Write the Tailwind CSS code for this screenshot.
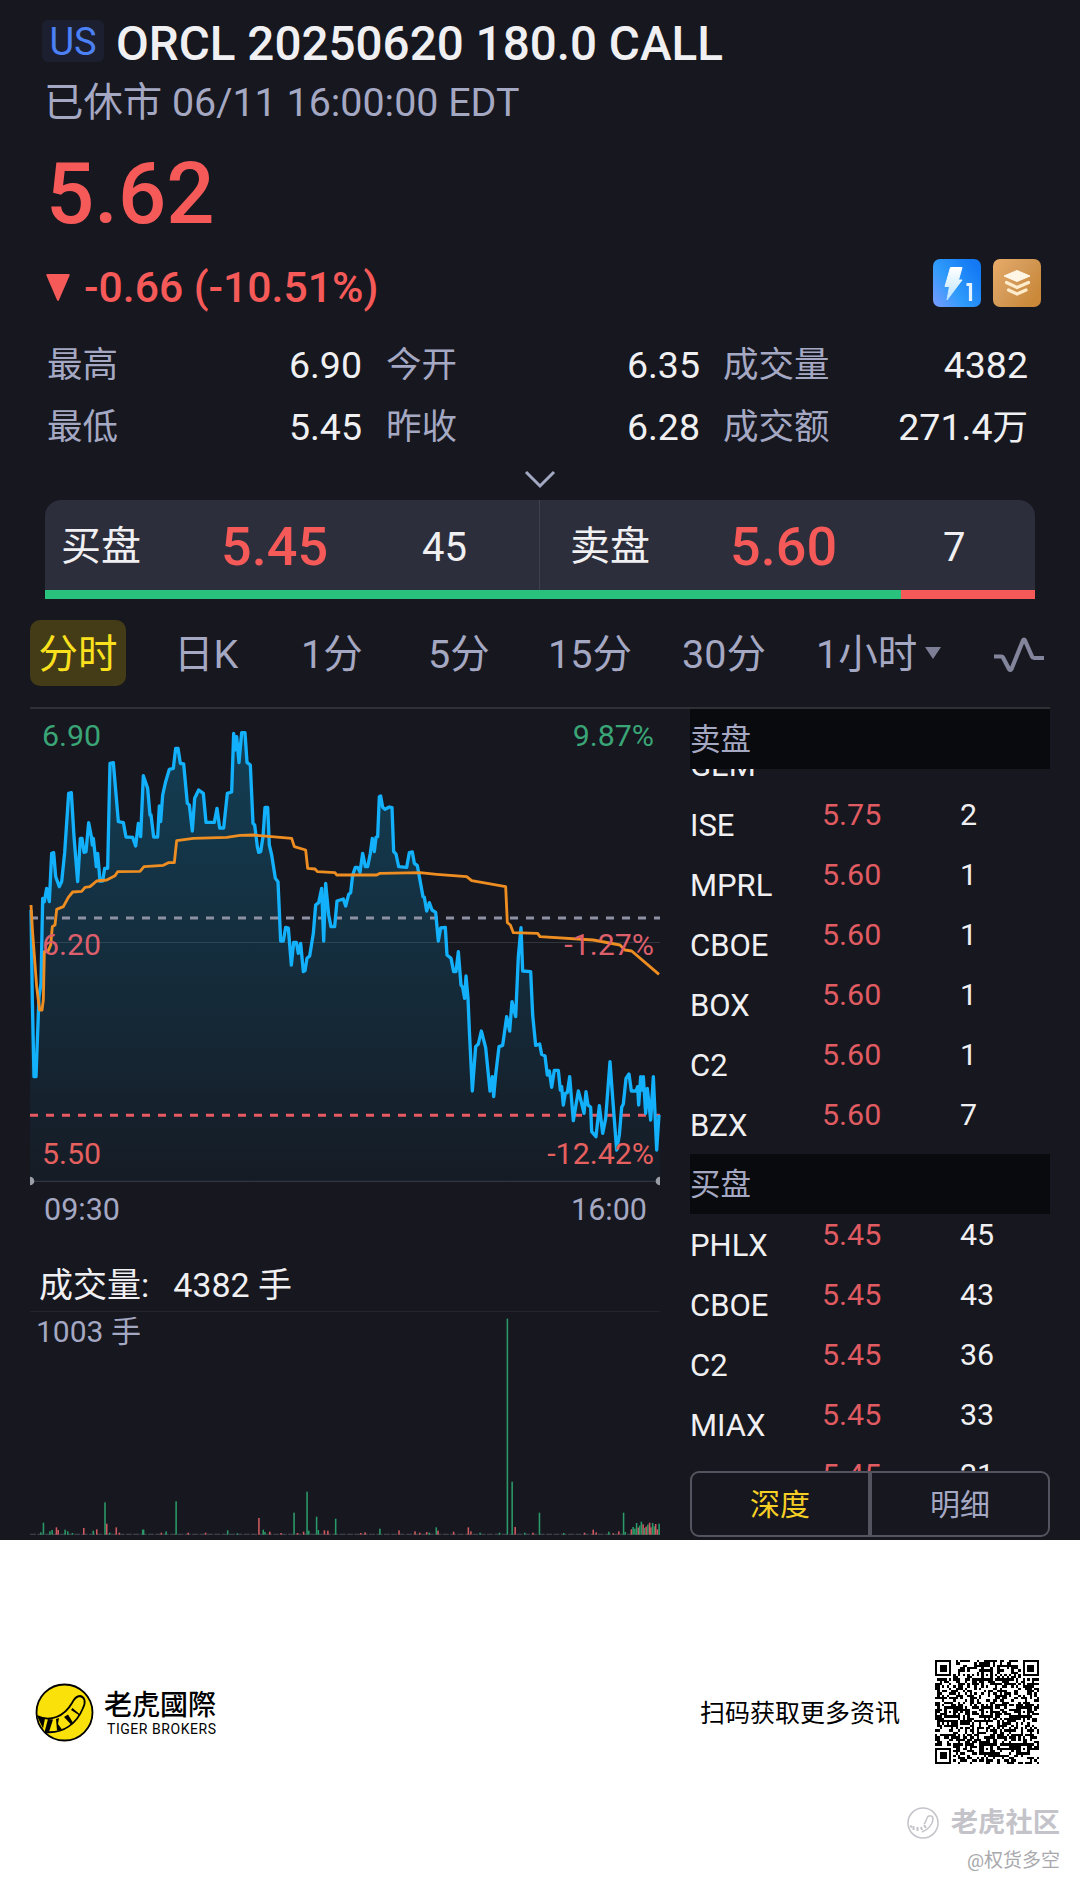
<!DOCTYPE html>
<html lang="zh-CN">
<head>
  <meta charset="UTF-8" />
  <title>ORCL 20250620 180.0 CALL</title>
  <script src="https://cdn.jsdelivr.net/npm/@tailwindcss/browser@4"></script>
</head>
<body class="w-[1080px] h-[1885px] overflow-hidden bg-white font-['Roboto','Noto_Sans_CJK_SC',sans-serif] leading-none whitespace-nowrap">

  <main class="h-[1540px] overflow-hidden bg-[#16171f] pt-5 text-[#f0f0f2]">

    <!-- Quote header -->
    <header class="pl-[42px] pr-[39px]">
      <div class="flex h-[42px] items-center">
        <span class="flex h-[42px] w-[62px] items-center justify-center rounded-md bg-[#1b1f30] pt-0.5 text-[38px] text-[#4c80f5]">US</span>
        <h1 class="ml-3 mt-2 text-[47.600px] font-medium">ORCL 20250620 180.0 CALL</h1>
      </div>
      <div class="flex h-[79px] items-center pl-0.5 pt-0.5 text-[39.400px] text-[#a5a8c3]">已休市 06/11 16:00:00 EDT</div>
      <div class="flex h-[102px] items-center pl-1 pt-1 text-[85px] font-medium text-[#f55a59]">5.62</div>
      <div class="flex h-[86px] items-center text-[#f55a59]">
        <svg class="ml-[3px] mt-[3px]" width="26" height="29" viewBox="0 0 26 29"><path d="M2 1h22q1 0 .6 1.500L14 27q-1 2-2 0L1.400 2.500Q1 1 2 1z" fill="#f55a59"/></svg>
        <span class="ml-[13px] mt-0.5 text-[42.700px] font-medium">-0.66 (-10.51%)</span>
        <div class="ml-auto mb-1.5 flex gap-3">
          <svg width="48" height="48" viewBox="0 0 48 48">
            <defs>
              <linearGradient id="blue" x1="0" y1="1" x2="1" y2="0.300"><stop offset="0" stop-color="#7a9bff"/><stop offset="0.450" stop-color="#2f9bfb"/><stop offset="1" stop-color="#1479f5"/></linearGradient>
              <linearGradient id="bolt" x1="0" y1="0" x2="0" y2="1"><stop offset="0" stop-color="#fff"/><stop offset="1" stop-color="#b9e4ff"/></linearGradient>
            </defs>
            <rect width="48" height="48" rx="7" fill="url(#blue)"/>
            <path d="M17.500 8.500h11.500l-3.500 12.500h3.500L14 41l2.500-13.500H12z" fill="url(#bolt)" stroke="url(#bolt)" stroke-linejoin="round"/>
            <path d="M33.500 25.500h4v16.500" fill="none" stroke="#e4f3ff" stroke-width="3.200"/>
          </svg>
          <svg width="48" height="48" viewBox="0 0 48 48">
            <defs><linearGradient id="gold" x1="0" y1="0" x2="1" y2="0.700"><stop offset="0" stop-color="#e9ab68"/><stop offset="0.500" stop-color="#d49a58"/><stop offset="1" stop-color="#ca8838"/></linearGradient></defs>
            <rect width="48" height="48" rx="7" fill="url(#gold)"/>
            <path d="M24 11.500L37 17 24 22.500 11 17z" fill="#fff6e6" stroke="#fff6e6" stroke-linejoin="round"/>
            <path d="M13.500 23.500L24 28.500l11.500-5M15.500 31L24 35l9-4" fill="none" stroke="#ffeccd" stroke-width="3.200" stroke-linecap="round"/>
          </svg>
        </div>
      </div>
    </header>

    <!-- Key figures -->
    <section class="mt-1.5 grid grid-cols-[315px_314px_304px] auto-rows-[62px] gap-x-6 pl-[47px] text-[37.500px] text-[#f0f0f2]">
      <div class="flex items-center justify-between"><span class="text-[35.500px] text-[#a5a8c3]">最高</span><span>6.90</span></div>
      <div class="flex items-center justify-between"><span class="text-[35.500px] text-[#a5a8c3]">今开</span><span>6.35</span></div>
      <div class="flex items-center justify-between"><span class="-ml-px text-[35.500px] text-[#a5a8c3]">成交量</span><span>4382</span></div>
      <div class="flex items-center justify-between"><span class="text-[35.500px] text-[#a5a8c3]">最低</span><span>5.45</span></div>
      <div class="flex items-center justify-between"><span class="text-[35.500px] text-[#a5a8c3]">昨收</span><span>6.28</span></div>
      <div class="flex items-center justify-between"><span class="-ml-px text-[35.500px] text-[#a5a8c3]">成交额</span><span>271.4<span class="text-[35.500px]">万</span></span></div>
    </section>
    <div class="flex h-[41px] items-center justify-center">
      <svg width="32" height="20" viewBox="0 0 32 20"><path d="M2 2l14 14L30 2" fill="none" stroke="#a5a8c3" stroke-width="3"/></svg>
    </div>

    <!-- Best bid / ask -->
    <section class="mx-[45px] h-[99px] overflow-hidden rounded-t-[16px] bg-[#2d2e3c]">
      <div class="grid h-[90px] grid-cols-[495px_495px]">
        <div class="grid grid-cols-[160px_201px_1fr] items-center border-r border-[#40414f] pl-4 pt-1">
          <span class="text-[40px]">买盘</span><span class="text-[54px] font-medium text-[#f55a59]">5.45</span><span class="pt-px text-[40px]">45</span>
        </div>
        <div class="grid grid-cols-[160px_213px_1fr] items-center pl-[30px] pt-1">
          <span class="text-[40px]">卖盘</span><span class="text-[54px] font-medium text-[#f55a59]">5.60</span><span class="pt-px text-[40px]">7</span>
        </div>
      </div>
      <div class="flex h-[9px]"><div class="w-[856px] bg-[#29c27c]"></div><div class="flex-1 bg-[#f55a59]"></div></div>
    </section>

    <!-- Period tabs -->
    <nav class="mt-[21px] ml-[30px] grid h-[66px] grid-cols-[144px_127px_127px_120px_134px_134px_176px_1fr] items-center text-[39.500px] text-[#a5a8c3]">
      <span class="flex h-[66px] w-24 items-center justify-center rounded-[10px] bg-[#433c17] pt-1 text-[#fbe01e]">分时</span>
      <span class="pt-1">日K</span>
      <span class="pt-1">1分</span>
      <span class="pt-1">5分</span>
      <span class="pt-1">15分</span>
      <span class="pt-1">30分</span>
      <span class="flex items-center gap-[7px] pt-1">1小时<svg class="mb-1" width="18" height="12" viewBox="0 0 18 12"><path d="M1 0h16L9 12z" fill="#7d7f96"/></svg></span>
      <svg class="mt-1" width="54" height="38" viewBox="0 0 54 38"><path d="M2 20.500h7.500q1 0 1.500 1l6 11.500q1.500 2 2.500 0L31 4.500q1-2 2 0l7 16q.6 1.500 2 1.500h10" fill="none" stroke="#83859c" stroke-width="4.200" stroke-linejoin="round"/></svg>
    </nav>

    <div class="mt-[21px] ml-[30px] flex w-[1020px] items-start justify-between border-t-2 border-[#2f3036]">

      <!-- Charts -->
      <div class="w-[630px]">
        <svg class="block overflow-visible" width="630" height="473" viewBox="30 27 1890 1419">
          <defs><linearGradient id="area" gradientUnits="userSpaceOnUse" x1="0" y1="90" x2="0" y2="1443"><stop offset="0" stop-color="#0ab4f5" stop-opacity="0.250"/><stop offset="1" stop-color="#0ab4f5" stop-opacity="0.030"/></linearGradient></defs>
          <path d="M30 727.500H1920" stroke="#30343c" stroke-width="3"/>
          <path d="M30 1444H1920" stroke="#393b46" stroke-width="3"/>
          <path id="priceArea" fill="url(#area)"/>
          <path d="M30 654H1920" stroke="#8e91a3" stroke-width="9" stroke-dasharray="24 24"/>
          <path d="M30 1246H1920" stroke="#e85a63" stroke-width="9" stroke-dasharray="24 24"/>
          <polyline id="priceLine" fill="none" stroke="#13b0fb" stroke-width="10" stroke-linejoin="round" points="33,630 37,900 42,1130 48,1130 57,890 63,850 68,595 73,605 80,565 88,605 95,460 101,458 107,530 118,560 125,545 134,458 146,280 154,278 162,410 173,545 181,415 186,415 192,457 198,455 206,368 214,410 217,435 220,415 229,500 233,460 240,543 248,543 254,505 263,505 270,190 280,188 295,365 310,368 318,411 338,412 347,438 355,370 362,410 370,227 383,265 390,345 393,345 401,411 413,411 418,318 422,365 428,285 437,245 448,208 460,205 467,145 474,145 481,190 491,192 502,310 508,315 517,393 524,295 536,270 550,280 558,367 583,367 591,325 599,384 611,384 622,280 635,276 641,100 645,150 650,110 657,188 665,98 675,98 681,187 691,195 699,370 704,375 712,440 716,457 722,455 729,410 735,322 743,322 748,435 755,465 766,535 774,545 782,723 790,723 797,682 805,684 814,795 821,727 829,727 835,760 842,730 850,815 855,812 861,775 869,768 880,700 887,615 896,608 905,565 911,723 917,550 926,645 933,680 944,680 951,603 970,597 977,618 986,583 992,578 998,525 1006,502 1013,502 1020,517 1028,460 1036,500 1043,500 1051,460 1057,415 1063,455 1068,412 1073,410 1078,290 1082,288 1088,322 1095,328 1108,321 1116,323 1121,455 1128,462 1136,500 1160,502 1168,458 1177,456 1183,490 1192,497 1209,590 1213,592 1220,633 1228,608 1236,630 1247,637 1255,723 1262,684 1276,682 1281,765 1293,775 1301,815 1308,815 1315,755 1323,855 1328,862 1334,895 1338,828 1344,895 1348,990 1357,1173 1367,1040 1375,1032 1384,993 1397,1043 1410,1173 1417,1130 1421,1190 1427,1125 1437,1040 1448,1036 1460,950 1469,993 1476,905 1487,950 1495,770 1503,683 1508,813 1532,815 1538,945 1547,1036 1559,1032 1565,1063 1575,1068 1582,1125 1588,1113 1595,1162 1603,1111 1615,1111 1621,1170 1625,1160 1630,1215 1636,1180 1642,1178 1649,1130 1660,1262 1675,1173 1685,1210 1692,1240 1698,1175 1704,1215 1712,1222 1715,1295 1728,1310 1738,1217 1748,1300 1757,1255 1770,1085 1780,1220 1790,1350 1798,1305 1805,1222 1810,1212 1818,1135 1827,1122 1834,1173 1848,1173 1853,1160 1856,1215 1862,1130 1866,1170 1870,1130 1877,1240 1882,1165 1892,1260 1900,1130 1910,1350 1917,1245"/>
          <polyline fill="none" stroke="#ee8e22" stroke-width="8.500" stroke-linejoin="round" points="33,615 38,700 45,793 50,860 55,900 59,930 66,930 70,900 73,755 85,752 92,735 97,680 105,675 110,628 130,620 145,592 158,576 185,574 195,562 210,560 230,543 260,540 285,527 293,515 360,514 372,500 430,496 445,488 463,488 470,422 520,415 620,412 660,406 700,405 815,415 823,440 857,450 863,505 885,507 892,515 945,518 950,525 1070,525 1080,520 1200,518 1250,523 1340,530 1355,542 1457,560 1462,668 1471,675 1480,698 1553,700 1560,710 1720,720 1800,735 1815,750 1835,753 1917,823"/>
          <path d="M30 1430a12 12 0 0 1 0 26zM1920 1430a12 12 0 0 0 0 26z" fill="#9a9ca6"/>
          <g font-size="91">
            <text x="66" y="137" fill="#3aa576">6.90</text>
            <text x="1902" y="137" fill="#3aa576" text-anchor="end">9.87%</text>
            <text x="66" y="764" fill="#dd5f6c">6.20</text>
            <text x="1902" y="764" fill="#dd5f6c" text-anchor="end">-1.27%</text>
            <text x="66" y="1391" fill="#e6605f">5.50</text>
            <text x="1902" y="1391" fill="#e6605f" text-anchor="end">-12.42%</text>
          </g>
        </svg>
        <div class="flex h-[55px] items-center justify-between pl-3.5 pr-[13px] pt-px text-[30.500px] text-[#a5a8c3]"><span>09:30</span><span>16:00</span></div>
        <div class="flex h-[75px] items-center border-b border-[#23242d] pt-[21px] pl-[9px] text-[34px]"><span>成交量:</span><span class="ml-[24px]">4382 手</span></div>
        <div class="relative h-[223px]">
          <span class="absolute left-[6px] top-[5px] text-[30px] text-[#a5a8c3]">1003 手</span>
          <svg class="block" width="630" height="223" viewBox="69 214 1453 669" preserveAspectRatio="none">
            <path d="M69 880.500H1522" stroke="#4a4d55" stroke-width="3" stroke-dasharray="14 3"/>
            <g id="volume"></g>
          </svg>
        </div>
      </div>

      <!-- Order book -->
      <aside class="w-[360px] text-[31px]">
        <h2 class="flex h-[60px] items-center bg-[#090a0d] pt-0.5 text-[30.500px] text-[#a5a8c3]">卖盘</h2>
        <div id="asks" class="flex h-[385px] flex-col justify-end overflow-hidden"></div>
        <h2 class="flex h-[60px] items-center bg-[#090a0d] pt-0.5 text-[30.500px] text-[#a5a8c3]">买盘</h2>
        <div id="bids" class="h-[257px] overflow-hidden"></div>
        <div class="grid h-[66px] grid-cols-[176px_1fr] rounded-[9px] border-2 border-[#53545f] text-[30px] text-[#a5a8c3]">
          <span class="flex items-center justify-center pt-0.5 text-[#f5cf24]">深度</span>
          <span class="flex items-center justify-center border-l-4 border-[#53545f] pt-0.5">明细</span>
        </div>
      </aside>
    </div>
  </main>

  <!-- Share footer -->
  <footer class="h-[345px] pt-[120px] text-black">
    <div class="flex h-[104px] items-center pl-[35px] pr-[41px]">
      <svg width="59" height="59" viewBox="0 0 59 59">
        <circle cx="29.500" cy="29.500" r="28" fill="#fbe10a" stroke="#000" stroke-width="1.800"/>
        <path d="M2 33C15 39 29 34 37 20c2-4 4-7 8-7 5 1 6 6 3 12C42 40 29 51 10 49" fill="#fbe10a" stroke="#000" stroke-width="1.800"/>
        <path d="M2 33l8 2.500-2 10zM13 36l5 .5-4 12.500h-4.500zM21 36l3-1-1 6 4 5.500-5 1zM29 34l4-2.500 5.500 9-2 1.500zM36 27l1.500-2 7 6v1.500z" fill="#000"/>
      </svg>
      <div class="ml-2.5 flex flex-col pt-px">
        <span lang="zh-Hant" class="text-[28px] font-medium font-['Noto_Sans_CJK_TC',sans-serif]">老虎國際</span>
        <span class="mt-[5px] ml-[3px] text-[14px] tracking-[0.550px]">TIGER BROKERS</span>
      </div>
      <span class="ml-auto mr-[35px] pt-0.5 text-[25px]">扫码获取更多资讯</span>
      <svg width="104" height="104" viewBox="0 0 45 45"><path id="qr" fill="#000" shape-rendering="crispEdges"/></svg>
    </div>
    <div class="mt-[43px] flex flex-col items-end pr-[20px] text-[#c3c3c9]">
      <div class="flex items-center">
        <svg width="32" height="32" viewBox="0 0 32 32" fill="none" stroke="#c3c3c9" stroke-width="1.500"><circle cx="16" cy="16" r="15"/><path d="M15 25c6-2 11-8 11-13 0-4-5-4-6-1-1 2-1 4-3 6"/><path d="M3 19l2 1M6.500 19v4M10.500 20v4M14 20l1 3M17 18l2 3" stroke-width="2"/></svg>
        <span class="ml-3 pt-0.5 text-[27.300px] font-bold">老虎社区</span>
      </div>
      <span class="mt-3 text-[19px] text-[#a9a9ad]">@权货多空</span>
    </div>
  </footer>

  <script>
    // close the price line down to the axis for the fill
    const pts = document.getElementById("priceLine").getAttribute("points");
    document.getElementById("priceArea").setAttribute("d", "M30 1443L" + pts + " 1920,1443Z");

    const asks = [["GEM", "5.75", 1], ["ISE", "5.75", 2], ["MPRL", "5.60", 1], ["CBOE", "5.60", 1], ["BOX", "5.60", 1], ["C2", "5.60", 1], ["BZX", "5.60", 7]];
    const bids = [["PHLX", "5.45", 45], ["CBOE", "5.45", 43], ["C2", "5.45", 36], ["MIAX", "5.45", 33], ["BOX", "5.45", 21]];
    const row = ([name, price, size]) => `
      <div class="grid h-[60px] shrink-0 grid-cols-[132px_138px_1fr] items-center">
        <span class="pt-0.5">${name}</span>
        <span class="pb-[17px] text-[30.400px] text-[#e05b62]">${price}</span>
        <span class="pb-[17px] text-[30.400px]">${size}</span>
      </div>`;
    document.getElementById("asks").innerHTML = asks.map(row).join("");
    document.getElementById("bids").innerHTML = bids.map(row).join("");

    // x, top, direction
    const bars = [
      [94, 875, 1], [100, 846, 1], [115, 872, 1], [120, 868, 1], [130, 860, 0], [134, 868, 0], [150, 867, 1], [156, 872, 1], [167, 877, 1],
      [193, 862, 0], [215, 870, 1], [223, 866, 0], [242, 785, 1], [246, 849, 0], [253, 876, 1], [268, 860, 0], [275, 876, 0],
      [329, 867, 1], [331, 867, 1], [372, 876, 0], [383, 872, 1], [406, 782, 1], [434, 876, 0], [474, 876, 0], [525, 869, 1], [547, 878, 1],
      [597, 832, 0], [607, 867, 1], [611, 874, 1], [622, 873, 0], [648, 877, 0], [678, 816, 1], [686, 877, 0], [700, 873, 0], [708, 753, 1], [712, 870, 1],
      [730, 828, 1], [734, 868, 1], [748, 869, 0], [756, 870, 0], [774, 834, 1], [832, 877, 0], [842, 875, 0], [876, 864, 1], [920, 869, 0],
      [957, 872, 0], [968, 876, 0], [984, 874, 0], [990, 876, 1], [1006, 860, 1], [1010, 870, 0], [1046, 873, 0], [1080, 860, 0], [1086, 872, 0], [1107, 876, 1],
      [1152, 876, 1], [1170, 234, 1], [1181, 723, 1], [1188, 859, 0], [1210, 876, 1], [1229, 876, 0], [1244, 816, 1], [1300, 877, 1], [1348, 876, 0],
      [1368, 867, 0], [1375, 875, 0], [1404, 873, 1], [1414, 878, 0], [1427, 872, 0], [1438, 816, 1], [1442, 874, 1],
      [1456, 866, 0], [1460, 859, 1], [1464, 864, 1], [1468, 847, 1], [1472, 861, 0], [1475, 855, 1], [1479, 843, 1], [1483, 851, 0], [1486, 862, 1],
      [1490, 858, 0], [1494, 852, 1], [1498, 846, 0], [1501, 860, 0], [1505, 847, 1], [1509, 857, 1], [1512, 850, 0], [1516, 866, 0], [1520, 849, 1]
    ];
    document.getElementById("volume").innerHTML = bars.map(([x, y, up]) =>
      `<rect x="${x - 1.8}" y="${y}" width="3.6" height="${882 - y}" fill="${up ? "#2b9a69" : "#d05a60"}"/>`).join("");

    // 45x45 code: finder and alignment marks over a hashed module grid
    const marks = [[6, 22], [22, 6], [22, 22], [22, 38], [38, 22], [38, 38]];
    function moduleOn(x, y) {
      for (const [fx, fy] of [[3, 3], [41, 3], [3, 41]]) {
        const d = Math.max(Math.abs(x - fx), Math.abs(y - fy));
        if (d <= 4) return d < 2 || d === 3;
      }
      for (const [ax, ay] of marks) {
        const d = Math.max(Math.abs(x - ax), Math.abs(y - ay));
        if (d <= 2) return d !== 1;
      }
      if (x === 6 || y === 6) return (x + y) % 2 === 0;
      let h = Math.imul(x * 73 + 11, 374761393) ^ Math.imul(y * 57 + 5, 668265263);
      h = Math.imul(h ^ (h >>> 13), 1274126177);
      return ((h ^ (h >>> 16)) & 255) < 132;
    }
    let d = "";
    for (let y = 0; y < 45; y++) for (let x = 0; x < 45; x++) if (moduleOn(x, y)) d += `M${x} ${y}h1v1h-1z`;
    document.getElementById("qr").setAttribute("d", d);
  </script>

</body>
</html>
